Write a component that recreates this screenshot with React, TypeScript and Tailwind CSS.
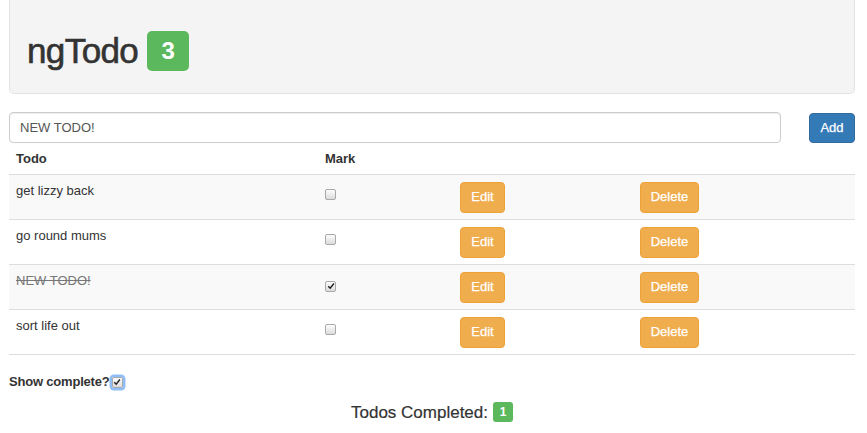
import React, { useState } from "react";

type Todo = { id: number; text: string; done: boolean };

const START: Todo[] = [
  { id: 1, text: "get lizzy back", done: false },
  { id: 2, text: "go round mums", done: false },
  { id: 3, text: "NEW TODO!", done: true },
  { id: 4, text: "sort life out", done: false },
];

function Check({ on, focus, onClick }: { on: boolean; focus?: boolean; onClick?: () => void }) {
  return (
    <span onClick={onClick}
      className={`inline-flex h-[11px] w-[11px] items-center justify-center rounded-[2px] border border-[#a9a9a9] bg-gradient-to-b from-[#fdfdfd] to-[#dcdcdc] ${focus ? "ring-[2.5px] ring-[#8fbdf5]" : ""}`}>
      {on && (
        <svg viewBox="0 0 10 10" className="h-[8px] w-[8px]">
          <path d="M1.5 5.2 L4 7.8 L8.6 1.8" fill="none" stroke="#222" strokeWidth="1.8" />
        </svg>
      )}
    </span>
  );
}

export default function App() {
  const [todos, setTodos] = useState<Todo[]>(START);
  const [draft, setDraft] = useState("NEW TODO!");
  const done = todos.filter((t) => t.done).length;

  return (
    <div className="min-h-[433px] bg-white pl-[9px] pr-[12px] text-[13px] text-[#333]" style={{ fontFamily: '"Liberation Sans", Arial, sans-serif' }}>
      <div className="flex h-[94px] items-center rounded-b-[5px] border-x border-b border-[#e3e3e3] bg-[#f4f4f4] pl-[17px] pt-[8px]">
        <h1 className="text-[35px] leading-none tracking-[-0.6px] text-[#333] [-webkit-text-stroke:0.6px_#333]">ngTodo</h1>
        <span className="ml-[9px] flex h-[40px] w-[42px] items-center justify-center rounded-[5px] bg-[#5cb85c] text-[24px] font-bold text-white">{todos.length - done}</span>
      </div>

      <div className="mt-[18px] flex items-center">
        <input value={draft} onChange={(e) => setDraft(e.target.value)}
          className="h-[31px] w-[772px] rounded-[4px] border border-[#ccc] px-[10px] text-[13px] text-[#555] shadow-[inset_0_1px_1px_rgba(0,0,0,0.075)] outline-none" />
        <button className="ml-auto h-[30px] w-[46px] rounded-[4px] border border-[#2e6da4] bg-[#337ab7] text-[13px] text-white [-webkit-text-stroke:0.25px_#fff]"
          onClick={() => draft && setTodos([...todos, { id: Date.now(), text: draft, done: false }])}>Add</button>
      </div>

      <div className="grid grid-cols-[308px_135px_180px_1fr]">
        <div className="col-span-4 grid h-[32px] grid-cols-subgrid items-center border-b border-[#ddd] font-bold">
          <div className="pl-[7px]">Todo</div>
          <div className="pl-[8px]">Mark</div>
          <div />
          <div />
        </div>
        {todos.map((t, i) => (
          <div key={t.id} className={`col-span-4 grid h-[45px] grid-cols-subgrid border-b border-[#ddd] ${i % 2 === 0 ? "bg-[#f9f9f9]" : "bg-white"}`}>
            <div className={`pl-[7px] pt-[7px] leading-[18px] ${t.done ? "text-[#777] line-through" : ""}`}>{t.text}</div>
            <div className="pl-[8px] pt-[11px]">
              <Check on={t.done} onClick={() => setTodos(todos.map((x) => x.id === t.id ? { ...x, done: !x.done } : x))} />
            </div>
            <div className="pl-[8px] pt-[7px]">
              <button className="h-[31px] w-[45px] rounded-[4px] border border-[#eea236] bg-[#f0ad4e] pb-[1px] text-[13px] text-white [-webkit-text-stroke:0.25px_#fff]">Edit</button>
            </div>
            <div className="pl-[8px] pt-[7px]">
              <button className="h-[31px] w-[59px] rounded-[4px] border border-[#eea236] bg-[#f0ad4e] pb-[1px] text-[13px] text-white [-webkit-text-stroke:0.25px_#fff]"
                onClick={() => setTodos(todos.filter((x) => x.id !== t.id))}>Delete</button>
            </div>
          </div>
        ))}
      </div>

      <div className="mt-[17px] flex items-center font-bold">
        <span className="tracking-[-0.2px]">Show complete?</span>
        <span className="ml-[2px] mt-[1px] flex"><Check on focus /></span>
      </div>

      <div className="mt-[8px] flex items-center justify-center text-[17px]">
        <span className="[-webkit-text-stroke:0.2px_#333]">Todos Completed:</span>
        <span className="ml-[5px] flex h-[20px] w-[20px] items-center justify-center rounded-[3px] bg-[#5cb85c] text-[12px] font-bold text-white">{done}</span>
      </div>
    </div>
  );
}
